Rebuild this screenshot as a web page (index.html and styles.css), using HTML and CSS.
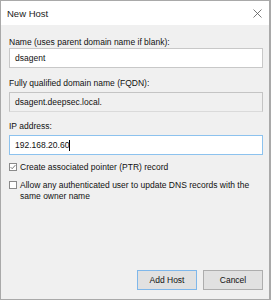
FILE: index.html
```html
<!DOCTYPE html>
<html>
<head>
<meta charset="utf-8">
<link rel="stylesheet" href="styles.css">
</head>
<body>
<div class="window">
  <div class="titlebar">
    <span class="title">New Host</span>
    <svg class="close" width="9" height="9" viewBox="0 0 9 9"><path d="M0.5 0.5L8.5 8.5M8.5 0.5L0.5 8.5" stroke="#555" stroke-width="0.8" fill="none"/></svg>
  </div>
  <div class="content">
    <div class="label l1">Name (uses parent domain name if blank):</div>
    <div class="field">dsagent</div>
    <div class="label l2">Fully qualified domain name (FQDN):</div>
    <div class="field readonly">dsagent.deepsec.local.</div>
    <div class="label l3">IP address:</div>
    <div class="field focused">192.168.20.60<span class="caret"></span></div>
    <div class="check c1">
      <span class="box"><svg width="6" height="6" viewBox="0 0 6 6"><path d="M0.6 3.1L2.2 4.7L5.4 1.1" stroke="#6a6a6a" stroke-width="0.9" fill="none"/></svg></span>
      <span class="ctext">Create associated pointer (PTR) record</span>
    </div>
    <div class="check c2">
      <span class="box"></span>
      <span class="ctext">Allow any authenticated user to update DNS records with the<br>same owner name</span>
    </div>
    <div class="spacer"></div>
    <div class="buttons">
      <div class="btn default">Add Host</div>
      <div class="btn">Cancel</div>
    </div>
  </div>
</div>
</body>
</html>
```
FILE: styles.css
```css
html, body {
  margin: 0;
  padding: 0;
  background: #f0f0f0;
}
body {
  font-family: "Liberation Sans", Arial, sans-serif;
  font-size: 8.5px;
  color: #111;
}
.window {
  box-sizing: border-box;
  width: 271px;
  height: 300px;
  border: 1px solid #a9a9a9;
  border-right-width: 2px;
  background: #f0f0f0;
  display: flex;
  flex-direction: column;
}
.titlebar {
  height: 24px;
  background: #ffffff;
  display: flex;
  align-items: center;
  justify-content: space-between;
  padding: 0 7px 0 6px;
  flex: none;
}
.title {
  font-size: 9.5px;
  color: #222;
  margin-top: 1px;
}
.close {
  display: block;
}
.content {
  flex: 1;
  display: flex;
  flex-direction: column;
  padding: 0 6px 9px 8px;
}
.label {
  line-height: 12px;
  height: 12px;
}
.l1 { margin-top: 11px; margin-bottom: 0; }
.l2 { margin-top: 9px; margin-bottom: 3px; }
.l3 { margin-top: 8px; margin-bottom: 3px; }
.field {
  box-sizing: border-box;
  height: 20px;
  border: 1px solid #c8c8c8;
  background: #ffffff;
  padding: 0 5px;
  display: flex;
  align-items: center;
}
.readonly {
  background: #f0f0f0;
  border-color: #c4c4c4;
  border-bottom-color: #dadada;
}
.focused {
  border-color: #8cc2ee;
}
.caret {
  display: inline-block;
  width: 1px;
  height: 11px;
  background: #000;
}
.check {
  display: flex;
  align-items: flex-start;
  gap: 3px;
}
.c1 { margin-top: 7px; }
.c2 { margin-top: 7px; }
.box {
  box-sizing: border-box;
  width: 8px;
  height: 8px;
  border: 1px solid #8a8a8a;
  background: #fff;
  flex: none;
  margin-top: 1px;
  display: flex;
  align-items: center;
  justify-content: center;
}
.box svg { display: block; }
.ctext {
  line-height: 11px;
}
.spacer { flex: 1; }
.buttons {
  display: flex;
  justify-content: flex-end;
  gap: 6px;
}
.btn {
  box-sizing: border-box;
  width: 60px;
  height: 20px;
  border: 1px solid #adadad;
  background: #e1e1e1;
  display: flex;
  align-items: center;
  justify-content: center;
}
.btn.default {
  border-color: #7fb7ea;
}
```
